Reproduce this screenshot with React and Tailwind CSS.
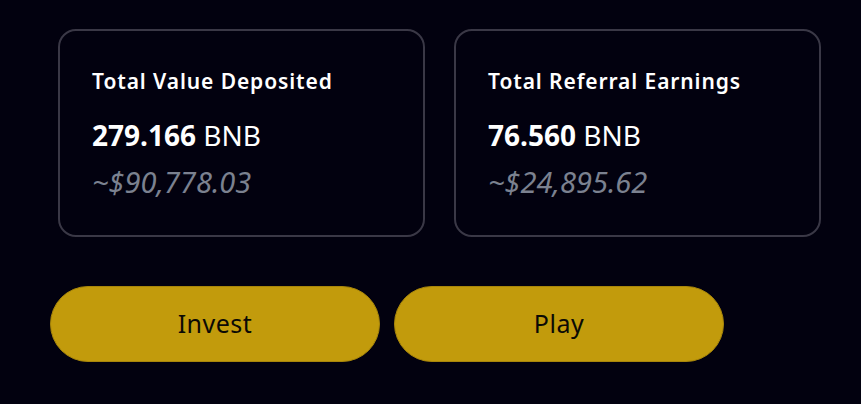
export default function App() {
    const stats = [
        { title: "Total Value Deposited", amount: "279.166", usd: "~$90,778.03" },
        { title: "Total Referral Earnings", amount: "76.560", usd: "~$24,895.62" },
    ];

    return (
        <div
            className="w-[861px] h-[404px] bg-[#02010f] overflow-hidden"
            style={{ fontFamily: "'Noto Sans', sans-serif" }}
        >
            <div className="flex gap-[29px] pl-[58px] pt-[29px]">
                {stats.map((s) => (
                    <StatCard key={s.title} {...s} />
                ))}
            </div>

            <div className="flex gap-[14px] pl-[50px] pt-[49px]">
                <button className="w-[330px] h-[76px] rounded-full bg-[#c29b0c] border border-[#a8860a] text-[#0b0a05] text-[25px] tracking-[0.5px]">
                    Invest
                </button>
                <button className="w-[330px] h-[76px] rounded-full bg-[#c29b0c] border border-[#a8860a] text-[#0b0a05] text-[25px] tracking-[0.5px]">
                    Play
                </button>
            </div>
        </div>
    );
}

function StatCard({ title, amount, usd }) {
    return (
        <div className="w-[367px] h-[208px] rounded-[18px] border-2 border-[#3a3846] px-[32px] pt-[35px]">
            <p className="text-white text-[21px] font-semibold leading-[30px] tracking-[0.9px]">{title}</p>
            <p className="text-white text-[28px] leading-[36px] mt-[21px]">
                <span className="font-bold">{amount}</span> BNB
            </p>
            <p className="text-[#7b8190] text-[29px] italic leading-[36px] mt-[11px]">{usd}</p>
        </div>
    );
}
